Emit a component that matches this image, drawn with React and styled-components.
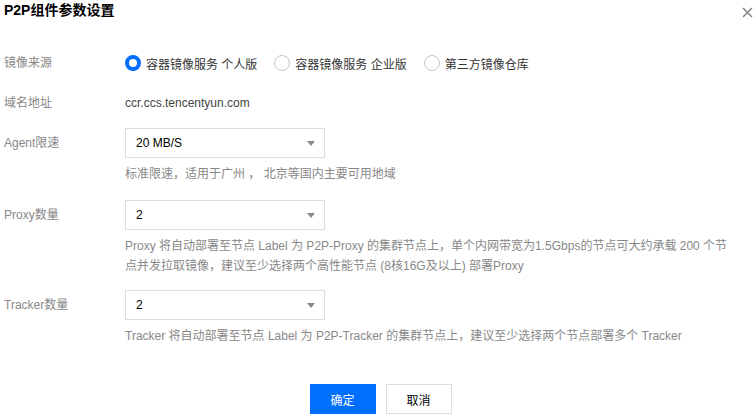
import React, { useState } from "react";
import styled, { createGlobalStyle } from "styled-components";

const Global = createGlobalStyle`
  html, body { margin: 0; padding: 0; background: #fff; }
  body {
    font-family: "Liberation Sans", Arial, "Noto Sans CJK SC", sans-serif;
    font-size: 12px;
    color: #333;
  }
  * { box-sizing: border-box; }
`;

const Dialog = styled.div`
  width: 756px;
  height: 419px;
  padding: 0 3px 0 4px;
  display: flex;
  flex-direction: column;
`;

const Header = styled.div`
  height: 22px;
  display: flex;
  align-items: flex-start;
  justify-content: space-between;
`;

const Title = styled.h3`
  margin: 0;
  font-size: 14px;
  line-height: 21px;
  font-weight: bold;
  color: #000;
`;

const CloseBtn = styled.button`
  border: 0;
  background: none;
  padding: 0;
  margin: 7px 0 0 0;
  width: 11px;
  height: 11px;
  cursor: pointer;
  display: flex;
`;

const Form = styled.div`
  display: flex;
  flex-direction: column;
  padding-top: 27px;
`;

const Row = styled.div`
  display: flex;
  align-items: flex-start;
  margin-top: ${(p) => p.$mt || 0}px;
`;

const Label = styled.div`
  width: 121px;
  flex: none;
  color: #888;
  line-height: ${(p) => p.$lh || 28}px;
`;

const Control = styled.div`
  display: flex;
  flex-direction: column;
`;

const Text = styled.div`
  line-height: 28px;
  color: #444;
`;

const RadioGroup = styled.div`
  display: flex;
  align-items: center;
  gap: 17px;
  height: 28px;
`;

const RadioItem = styled.label`
  display: flex;
  align-items: center;
  gap: 5px;
  cursor: pointer;
  color: #333;
`;

const Circle = styled.span`
  width: 16px;
  height: 16px;
  border-radius: 50%;
  border: ${(p) => (p.$checked ? "4.5px solid #006eff" : "1px solid #c4c4c4")};
  background: #fff;
  flex: none;
`;

const Select = styled.div`
  width: 200px;
  height: 30px;
  border: 1px solid #ddd;
  display: flex;
  align-items: center;
  justify-content: space-between;
  padding: 0 9px 0 10px;
  color: #000;
`;

const Arrow = styled.span`
  width: 0;
  height: 0;
  border-left: 4px solid transparent;
  border-right: 4px solid transparent;
  border-top: 5px solid #888;
  margin-top: 1px;
`;

const Hint = styled.div`
  margin-top: 6px;
  color: #888;
  line-height: 20px;
  white-space: nowrap;
`;

const Footer = styled.div`
  display: flex;
  justify-content: center;
  gap: 10px;
  margin-top: 38px;
  padding-left: 4px;
`;

const Button = styled.button`
  width: 66px;
  height: 30px;
  font-family: inherit;
  font-size: 12px;
  cursor: pointer;
  border: 1px solid ${(p) => (p.$primary ? "#006eff" : "#ddd")};
  background: ${(p) => (p.$primary ? "#006eff" : "#fff")};
  color: ${(p) => (p.$primary ? "#fff" : "#000")};
  padding: 0;
`;

const sources = ["容器镜像服务 个人版", "容器镜像服务 企业版", "第三方镜像仓库"];

export default function App() {
  const [src, setSrc] = useState(0);
  return (
    <>
      <Global />
      <Dialog>
        <Header>
          <Title>P2P组件参数设置</Title>
          <CloseBtn aria-label="close">
            <svg width="11" height="11" viewBox="0 0 11 11">
              <path d="M1 1L10 10M10 1L1 10" stroke="#888" strokeWidth="1.6" />
            </svg>
          </CloseBtn>
        </Header>
        <Form>
          <Row>
            <Label>镜像来源</Label>
            <RadioGroup>
              {sources.map((s, i) => (
                <RadioItem key={s} onClick={() => setSrc(i)}>
                  <Circle $checked={src === i} />
                  {s}
                </RadioItem>
              ))}
            </RadioGroup>
          </Row>
          <Row $mt={12}>
            <Label>域名地址</Label>
            <Text>ccr.ccs.tencentyun.com</Text>
          </Row>
          <Row $mt={11}>
            <Label $lh={30}>Agent限速</Label>
            <Control>
              <Select>
                20 MB/S
                <Arrow />
              </Select>
              <Hint>标准限速，适用于广州 ， 北京等国内主要可用地域</Hint>
            </Control>
          </Row>
          <Row $mt={16}>
            <Label $lh={30}>Proxy数量</Label>
            <Control>
              <Select>
                2
                <Arrow />
              </Select>
              <Hint>
                Proxy 将自动部署至节点 Label 为 P2P-Proxy 的集群节点上，单个内网带宽为1.5Gbps的节点可大约承载 200 个节
                <br />
                点并发拉取镜像，建议至少选择两个高性能节点 (8核16G及以上) 部署Proxy
              </Hint>
            </Control>
          </Row>
          <Row $mt={14}>
            <Label $lh={30}>Tracker数量</Label>
            <Control>
              <Select>
                2
                <Arrow />
              </Select>
              <Hint>Tracker 将自动部署至节点 Label 为 P2P-Tracker 的集群节点上，建议至少选择两个节点部署多个 Tracker</Hint>
            </Control>
          </Row>
        </Form>
        <Footer>
          <Button $primary>确定</Button>
          <Button>取消</Button>
        </Footer>
      </Dialog>
    </>
  );
}
